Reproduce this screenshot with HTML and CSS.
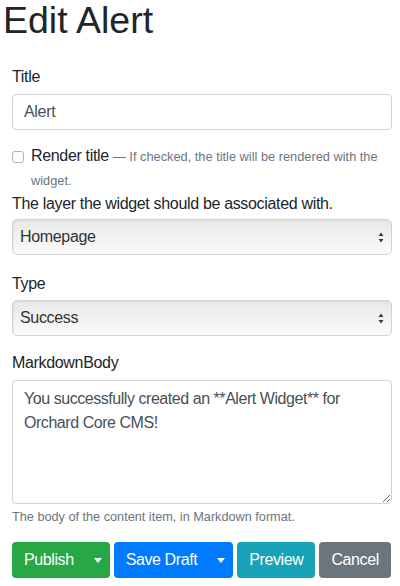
FILE: index.html
```html
<!DOCTYPE html>
<html lang="en">
<head>
<meta charset="utf-8">
<title>Edit Alert</title>
<link rel="stylesheet" href="styles.css">
</head>
<body>
<h1 class="page-title">Edit Alert</h1>
<form class="form">
  <div class="field field-title">
    <label class="label" for="title">Title</label>
    <input class="control" id="title" type="text" value="Alert">
  </div>

  <div class="check">
    <span class="check-box"></span>
    <div class="check-text"><span class="check-label">Render title</span> <span class="hint">— If checked, the title will be rendered with the</span> <span class="hint">widget.</span></div>
  </div>

  <div class="field field-layer">
    <div class="label label-tight">The layer the widget should be associated with.</div>
    <div class="select">
      <span class="select-value">Homepage</span>
      <svg class="select-arrows" width="6" height="11" viewBox="0 0 6 11"><path d="M3 0.5 L5.5 4 L0.5 4 Z M0.5 7 L5.5 7 L3 10.5 Z" fill="#3a3a3a"/></svg>
    </div>
  </div>

  <div class="field field-type">
    <div class="label label-type">Type</div>
    <div class="select">
      <span class="select-value">Success</span>
      <svg class="select-arrows" width="6" height="11" viewBox="0 0 6 11"><path d="M3 0.5 L5.5 4 L0.5 4 Z M0.5 7 L5.5 7 L3 10.5 Z" fill="#3a3a3a"/></svg>
    </div>
  </div>

  <div class="field field-body">
    <label class="label" for="body">MarkdownBody</label>
    <textarea class="control area" id="body">You successfully created an **Alert Widget** for Orchard Core CMS!</textarea>
    <div class="help">The body of the content item, in Markdown format.</div>
  </div>

  <div class="actions">
    <div class="btn-group">
      <button type="button" class="btn btn-success btn-main">Publish</button>
      <button type="button" class="btn btn-success btn-toggle"><span class="caret"></span></button>
    </div>
    <div class="btn-group">
      <button type="button" class="btn btn-primary btn-main">Save Draft</button>
      <button type="button" class="btn btn-primary btn-toggle"><span class="caret"></span></button>
    </div>
    <button type="button" class="btn btn-info">Preview</button>
    <button type="button" class="btn btn-secondary">Cancel</button>
  </div>
</form>
</body>
</html>
```
FILE: styles.css
```css
html, body {
  background: #fff;
}

body {
  margin: 0;
  padding: 0 8px 0 12px;
  font-family: "Liberation Sans", Arial, sans-serif;
  font-size: 16px;
  line-height: 24px;
  color: #212529;
  letter-spacing: -0.33px;
}

.page-title {
  margin: 0 0 0 -9px;
  font-size: 37.5px;
  line-height: 40px;
  font-weight: normal;
  letter-spacing: 0;
}

.form {
  margin: 0;
}

.field-title {
  margin-top: 25px;
}

.label {
  display: block;
  margin-bottom: 5px;
}

.label-tight {
  margin-bottom: 3px;
}

.label-type {
  margin-bottom: 4px;
}

.control {
  display: block;
  box-sizing: border-box;
  width: 100%;
  height: 36px;
  margin: 0;
  padding: 0 11px;
  border: 1px solid #ced4da;
  border-radius: 4px;
  background: #fff;
  font-family: inherit;
  font-size: 16px;
  letter-spacing: -0.33px;
  color: #495057;
  outline: none;
}

.check {
  display: flex;
  margin-top: 14px;
}

.check-box {
  flex: none;
  box-sizing: border-box;
  width: 12px;
  height: 12px;
  margin-top: 7px;
  margin-right: 7px;
  border: 1px solid #b3b3b3;
  border-radius: 3px;
  background: #fff;
}

.check-text {
  flex: 1;
  line-height: 24px;
}

.hint {
  font-size: 12.8px;
  line-height: 1;
  color: #6c757d;
  letter-spacing: 0;
}

.select {
  display: flex;
  align-items: center;
  box-sizing: border-box;
  height: 36px;
  padding: 0 7px 0 7px;
  border: 1px solid #d3d3d3;
  border-radius: 5px;
  background: linear-gradient(#e8e8e8, #fbfbfb);
  box-shadow: inset 1px 1px 2px rgba(0, 0, 0, 0.06);
  color: #333;
}

.select-value {
  flex: 1;
}

.select-arrows {
  flex: none;
  display: block;
}

.field-type {
  margin-top: 17px;
}

.field-body {
  margin-top: 15px;
}

.area {
  height: 124px;
  padding: 6px 11px;
  line-height: 24px;
  resize: vertical;
  letter-spacing: -0.45px;
}

.help {
  margin-top: 4px;
  font-size: 12.7px;
  line-height: 19px;
  color: #6c757d;
  letter-spacing: 0;
}

.actions {
  display: flex;
  gap: 4px;
  margin-top: 15px;
}

.btn-group {
  display: flex;
  flex: none;
}

.btn {
  flex: none;
  box-sizing: border-box;
  height: 36px;
  margin: 0;
  padding: 0 12px;
  border: 0;
  border-radius: 4px;
  font-family: inherit;
  font-size: 16px;
  letter-spacing: -0.4px;
  line-height: 36px;
  white-space: nowrap;
  color: #fff;
}

.btn-main {
  border-radius: 4px 0 0 4px;
}

.btn-toggle {
  display: flex;
  align-items: center;
  padding: 0 8px;
  border-radius: 0 4px 4px 0;
}

.caret {
  display: block;
  width: 0;
  height: 0;
  border-top: 5px solid #fff;
  border-left: 4.5px solid transparent;
  border-right: 4.5px solid transparent;
}

.btn-success { background: #28a745; }
.btn-primary { background: #007bff; }
.btn-info { background: #17a2b8; }
.btn-secondary { background: #6c757d; }
```
